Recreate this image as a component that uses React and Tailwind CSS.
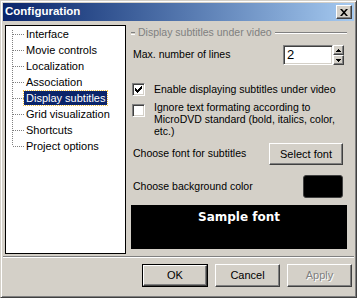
import React from 'react';

const items = [
  'Interface',
  'Movie controls',
  'Localization',
  'Association',
  'Display subtitles',
  'Grid visualization',
  'Shortcuts',
  'Project options',
];

const raised =
  'border border-t-white border-l-white border-r-[#404040] border-b-[#404040] shadow-[inset_-1px_-1px_#808080]';
const sunken =
  'border border-t-[#808080] border-l-[#808080] border-r-white border-b-white shadow-[inset_1px_1px_#404040,inset_-1px_-1px_#d4d0c8]';

function Checkbox({ checked }) {
  return (
    <span className={`w-[13px] h-[13px] bg-white shrink-0 flex items-center justify-center ${sunken}`}>
      {checked && (
        <svg width="7" height="7" viewBox="0 0 7 7">
          <path d="M0 2h1v1h1v1h1v-1h1v-1h1v-1h1v-1h1v3h-1v1h-1v1h-1v1h-1v1h-1v-1h-1v-1h-1z" fill="#000" />
        </svg>
      )}
    </span>
  );
}

function Button({ children, def, disabled, className = '' }) {
  const inner = (
    <span
      className={`flex-1 flex items-center justify-center bg-[#d4d0c8] ${raised} ${
        disabled ? 'text-[#808080] [text-shadow:1px_1px_#fff]' : 'text-black'
      }`}
    >
      {children}
    </span>
  );
  return (
    <div className={`flex ${def ? 'border border-black' : ''} ${className}`}>{inner}</div>
  );
}

export default function App() {
  return (
    <div
      className="w-[357px] h-[298px] bg-[#d4d0c8] border border-t-[#d4d0c8] border-l-[#d4d0c8] border-r-[#404040] border-b-[#404040] shadow-[inset_1px_1px_#fff,inset_-1px_-1px_#808080] p-[2px] flex flex-col text-[11px] text-black"
      style={{ fontFamily: '"Liberation Sans", Arial, sans-serif' }}
    >
      {/* title bar */}
      <div className="h-[18px] flex items-center justify-between bg-gradient-to-r from-[#0a246a] to-[#a6caf0] pl-[2px] pr-[2px]">
        <span className="text-white font-bold text-[11.5px] leading-none">Configuration</span>
        <span className={`w-[16px] h-[14px] bg-[#d4d0c8] flex items-center justify-center ${raised}`}>
          <svg width="8" height="7" viewBox="0 0 8 7">
            <path d="M0 0h2l2 2.2L6 0h2L5 3.5 8 7H6L4 4.8 2 7H0l3-3.5z" fill="#000" />
          </svg>
        </span>
      </div>

      {/* body */}
      <div className="flex mt-[4px] ml-[2px]">
        <div className="relative w-[121px] h-[229px] bg-white border border-black">
          <svg className="absolute left-0 top-0" width="119" height="150">
            <line x1="6.5" y1="4" x2="6.5" y2="120" stroke="#808080" strokeDasharray="1 1" />
            {items.map((_, i) => (
              <line
                key={i}
                x1="7"
                y1={8.5 + i * 16}
                x2="19"
                y2={8.5 + i * 16}
                stroke="#808080"
                strokeDasharray="1 1"
              />
            ))}
          </svg>
          <div className="relative flex flex-col pl-[18px]">
            {items.map(t => (
              <div key={t} className="h-[16px] flex items-center">
                <span
                  className={`px-[2px] leading-[14px] ${
                    t === 'Display subtitles'
                      ? 'bg-[#0a246a] text-white outline-1 outline-dotted outline-[#f0c040]'
                      : ''
                  }`}
                >
                  {t}
                </span>
              </div>
            ))}
          </div>
        </div>

        <div className="w-[216px] ml-[5px] flex flex-col text-[10.5px]">
          <div className="mt-[1px] h-[14px] flex items-center gap-[3px] text-[#808080]">
            <span className="w-[4px] h-[2px] border-t border-[#808080] shadow-[0_1px_#fff]"></span>
            <span>Display subtitles under video</span>
            <span className="flex-1 h-[2px] border-t border-[#808080] border-b border-b-white"></span>
          </div>

          <div className="mt-[5px] h-[20px] flex items-center justify-between pl-[2px] pr-[3px]">
            <span>Max. number of lines</span>
            <div className="flex">
              <div className={`w-[50px] h-[20px] bg-white pl-[3px] flex items-center text-[13px] ${sunken}`}>2</div>
              <div className="flex flex-col">
                <span className={`w-[11px] h-[10px] bg-[#d4d0c8] flex items-center justify-center ${raised}`}>
                  <svg width="5" height="3" viewBox="0 0 5 3"><path d="M2 0h1v1h1v1h1v1H0V2h1V1h1z" fill="#000" /></svg>
                </span>
                <span className={`w-[11px] h-[10px] bg-[#d4d0c8] flex items-center justify-center ${raised}`}>
                  <svg width="5" height="3" viewBox="0 0 5 3"><path d="M0 0h5v1H4v1H3v1H2V2H1V1H0z" fill="#000" /></svg>
                </span>
              </div>
            </div>
          </div>

          <div className="mt-[18px] h-[13px] flex items-center gap-[9px] pl-[1px]">
            <Checkbox checked />
            <span>Enable displaying subtitles under video</span>
          </div>

          <div className="mt-[5px] flex items-start gap-[9px] pl-[1px]">
            <span className="mt-[3px]"><Checkbox /></span>
            <span className="leading-[12px]">
              Ignore text formating according to
              <br />
              MicroDVD standard (bold, italics, color,
              <br />
              etc.)
            </span>
          </div>

          <div className="mt-[6px] h-[22px] flex items-center justify-between pl-[2px] pr-[4px]">
            <span>Choose font for subtitles</span>
            <Button className="w-[74px] h-[22px] text-[11px]">Select font</Button>
          </div>

          <div className="mt-[10px] h-[23px] flex items-center justify-between pl-[2px] pr-[4px]">
            <span>Choose background color</span>
            <span className="w-[40px] h-[23px] bg-black rounded-[3px] border border-[#404040]"></span>
          </div>

          <div className="mt-[7px] h-[44px] bg-black flex justify-center pt-[4px]">
            <span
              className="text-white font-bold text-[12px] leading-[16px]"
              style={{ fontFamily: '"DejaVu Sans", sans-serif' }}
            >
              Sample font
            </span>
          </div>
        </div>
      </div>

      <div className="mt-[2px] mx-[0px] h-[2px] border-t border-[#808080] border-b border-b-white"></div>

      <div className="mt-[6px] flex justify-end gap-[7px] pr-[2px]">
        <Button def className="w-[66px] h-[23px]">OK</Button>
        <Button className="w-[65px] h-[23px]">Cancel</Button>
        <Button disabled className="w-[65px] h-[23px]">Apply</Button>
      </div>
    </div>
  );
}
